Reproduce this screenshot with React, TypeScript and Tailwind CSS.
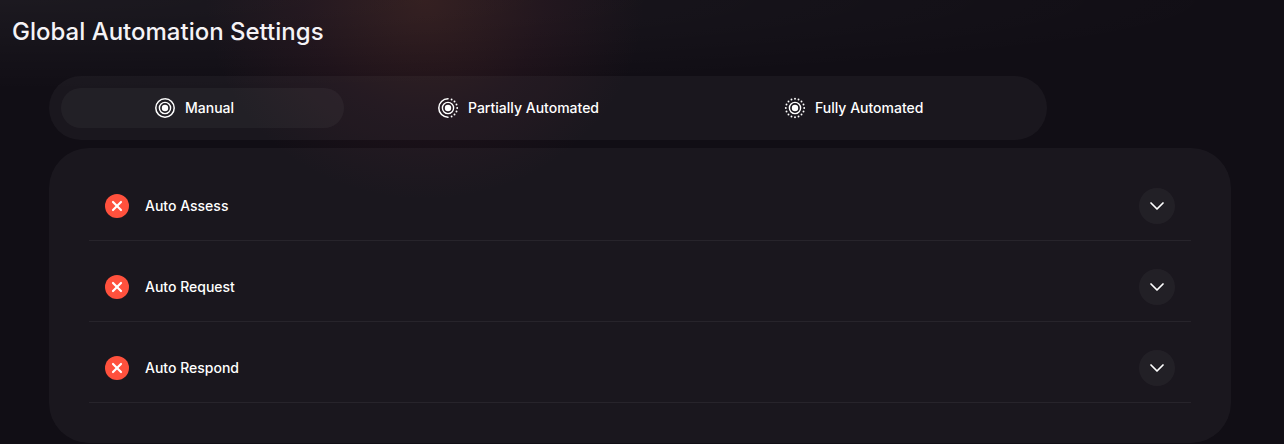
import { ChevronDown, X } from "lucide-react";
import { useState } from "react";

interface TargetIconProps {
  dots: number[];
  arc?: string;
}

const fullRing = "M12 2.8a9.2 9.2 0 1 1 0 18.4a9.2 9.2 0 1 1 0-18.4";
const leftRing = "M12 2.8a9.2 9.2 0 0 0 0 18.4";

const rightDots = [-67, -45, -22.5, 0, 22.5, 45, 67];
const allDots = Array.from({ length: 16 }, (_, i) => i * 22.5);

const tabs = [
  { label: "Manual", arc: fullRing, dots: [] },
  { label: "Partially Automated", arc: leftRing, dots: rightDots },
  { label: "Fully Automated", arc: undefined, dots: allDots },
];

const settings = ["Auto Assess", "Auto Request", "Auto Respond"];

const TargetIcon = ({ dots, arc }: TargetIconProps) => (
  <svg viewBox="0 0 24 24" fill="none" className="h-6 w-6 shrink-0" aria-hidden>
    <circle cx="12" cy="12" r="3.2" fill="currentColor" />
    <circle cx="12" cy="12" r="5.6" stroke="currentColor" strokeWidth="1.4" />
    {arc && (
      <path
        d={arc}
        stroke="currentColor"
        strokeWidth="1.5"
        strokeLinecap="round"
      />
    )}
    {dots.map((angle) => (
      <circle
        key={angle}
        cx={12 + 9.2 * Math.cos((angle * Math.PI) / 180)}
        cy={12 + 9.2 * Math.sin((angle * Math.PI) / 180)}
        r="0.95"
        fill="currentColor"
      />
    ))}
  </svg>
);

const App = () => {
  const [active, setActive] = useState("Manual");

  return (
    <main className="min-h-screen bg-[#110e15] bg-[radial-gradient(ellipse_220px_200px_at_425px_0px,#b0503830,#90304018_55%,transparent),radial-gradient(ellipse_1250px_90px_at_0px_0px,#ffffff0c,transparent)] bg-no-repeat font-['Inter',sans-serif] text-white">
      <h1 className="px-3 pt-4 text-2xl leading-8 font-medium text-[#f5f3f6]">
        Global Automation Settings
      </h1>

      <div className="mt-7 mr-[53px] ml-[49px]">
        <div
          role="tablist"
          className="grid max-w-[998px] grid-cols-[283fr_347fr_344fr] rounded-[32px] bg-white/4 p-3"
        >
          {tabs.map(({ label, arc, dots }) => (
            <button
              key={label}
              role="tab"
              aria-selected={active === label}
              onClick={() => setActive(label)}
              className="flex h-10 items-center gap-2 rounded-[20px] pl-[92px] text-sm font-medium whitespace-nowrap aria-selected:bg-white/4"
            >
              <TargetIcon arc={arc} dots={dots} />
              {label}
            </button>
          ))}
        </div>

        <section className="mt-2 rounded-[40px] bg-white/4 p-10">
          <ul className="flex flex-col gap-7">
            {settings.map((name) => (
              <li
                key={name}
                className="flex items-center border-b border-white/6 px-4 pb-4"
              >
                <span className="flex h-6 w-6 items-center justify-center rounded-full bg-[#ff513d]">
                  <X className="h-4 w-4" strokeWidth={3.25} />
                </span>
                <span className="ml-4 text-sm font-medium">{name}</span>
                <button
                  aria-label={`Expand ${name}`}
                  className="ml-auto flex h-9 w-9 items-center justify-center rounded-full bg-white/4"
                >
                  <ChevronDown className="h-6 w-6" strokeWidth={1.75} />
                </button>
              </li>
            ))}
          </ul>
        </section>
      </div>
    </main>
  );
};

export default App;
